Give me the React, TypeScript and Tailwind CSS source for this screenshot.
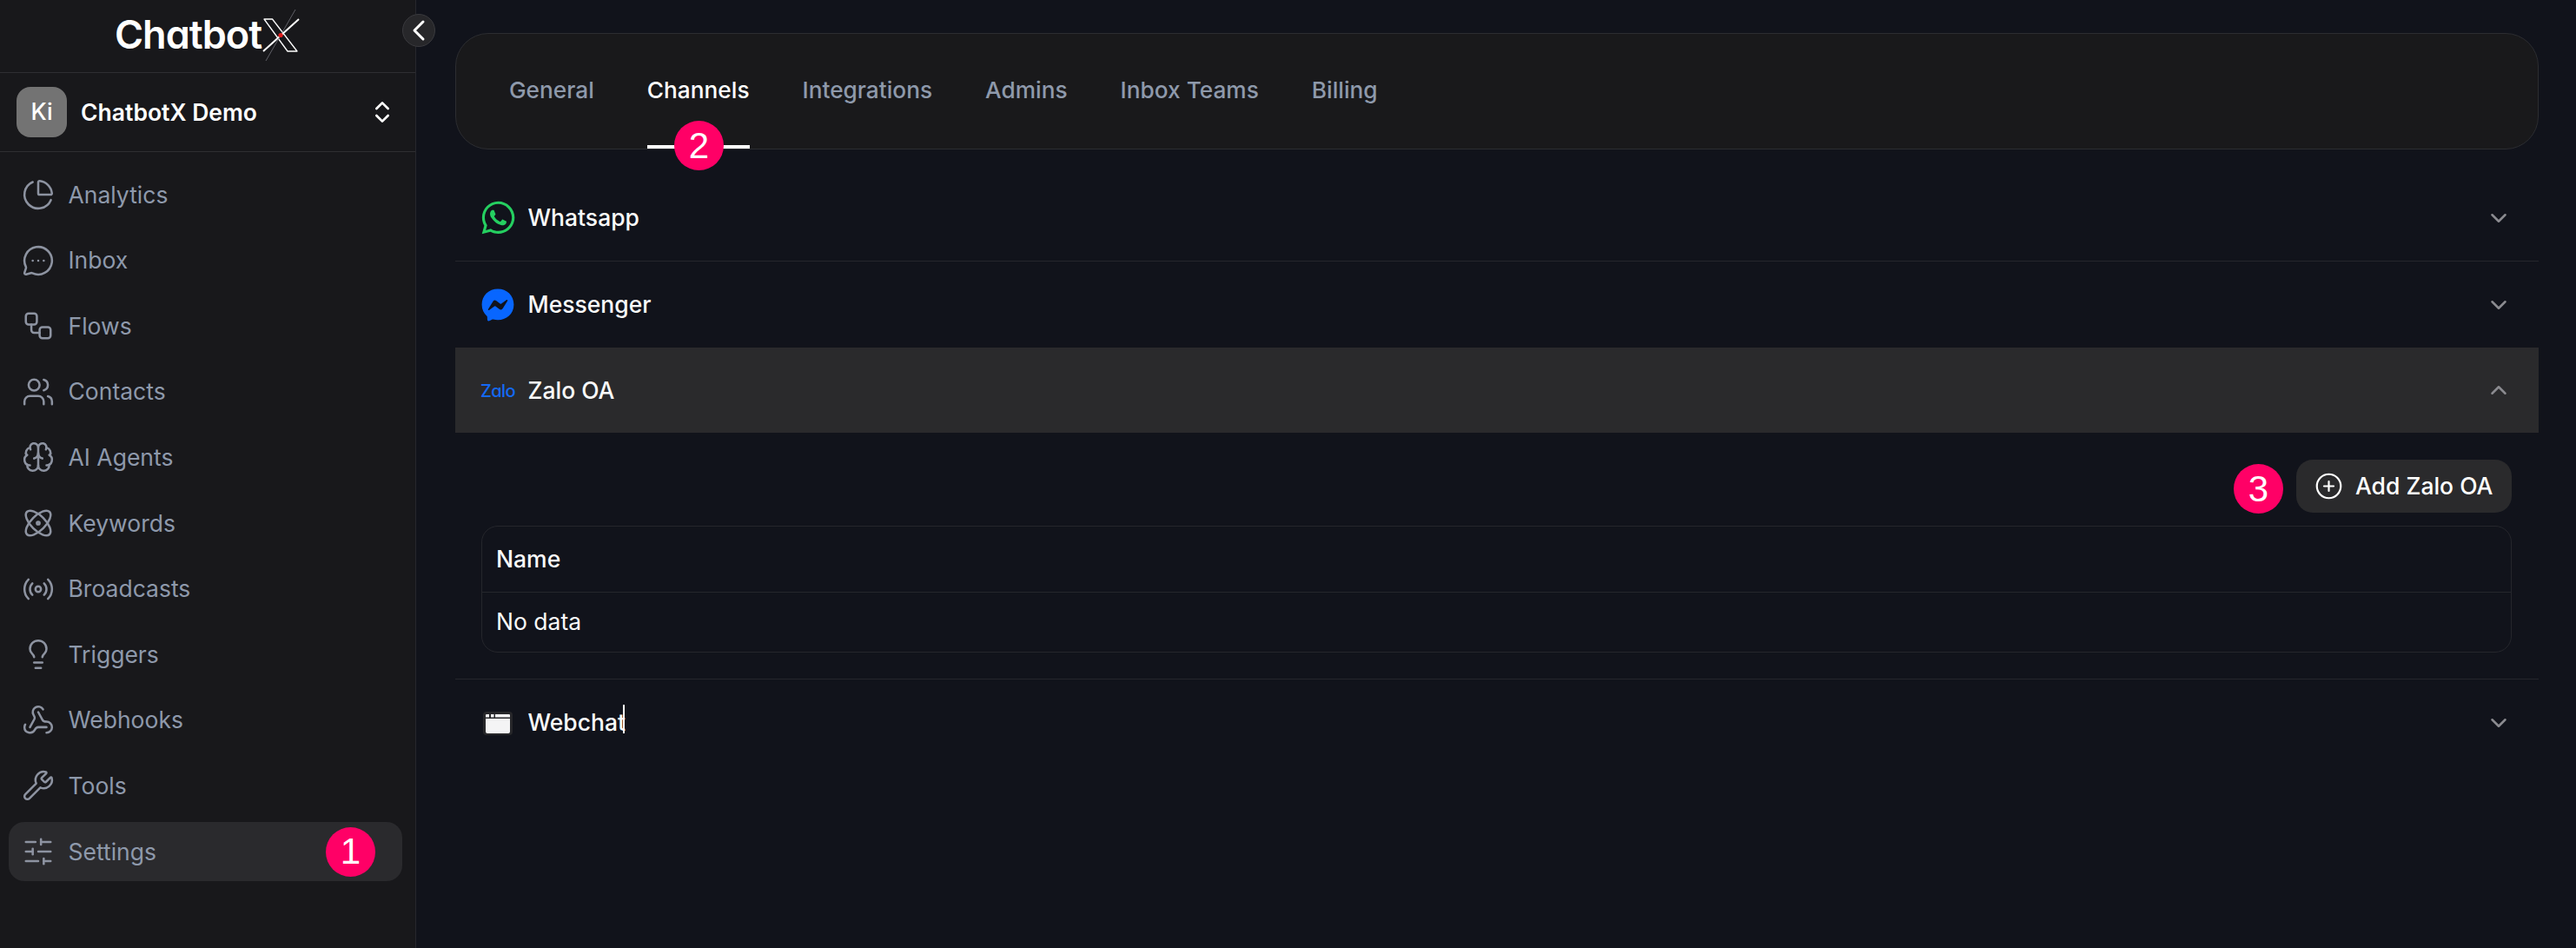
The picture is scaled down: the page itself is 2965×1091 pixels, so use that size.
import React from "react";
import {
  ChartPie, MessageCircleMore, Workflow, Users, Brain, Atom, Radio, Lightbulb, Webhook, Wrench,
  SlidersHorizontal, ChevronsUpDown, ChevronLeft, ChevronDown, ChevronUp, CirclePlus,
} from "lucide-react";
import { FaWhatsapp, FaFacebookMessenger } from "react-icons/fa";

const navItems = [
  { label: "Analytics", Icon: ChartPie },
  { label: "Inbox", Icon: MessageCircleMore },
  { label: "Flows", Icon: Workflow },
  { label: "Contacts", Icon: Users },
  { label: "AI Agents", Icon: Brain },
  { label: "Keywords", Icon: Atom },
  { label: "Broadcasts", Icon: Radio },
  { label: "Triggers", Icon: Lightbulb },
  { label: "Webhooks", Icon: Webhook },
  { label: "Tools", Icon: Wrench },
  { label: "Settings", Icon: SlidersHorizontal },
];

const tabs = ["General", "Channels", "Integrations", "Admins", "Inbox Teams", "Billing"];

function Badge({ n, className }: { n: string; className: string }) {
  return (
    <span
      className={
        "absolute flex h-[57px] w-[57px] items-center justify-center rounded-full bg-[#ff0066] font-['Liberation_Sans',sans-serif] text-[42px] leading-none text-white " +
        className
      }
    >
      {n}
    </span>
  );
}

function LogoX() {
  return (
    <svg width="46" height="62" viewBox="0 0 46 62" fill="none" className="shrink-0">
      <path d="M3 13 L12.5 13 L41 50 L30 50 Z" stroke="#fff" strokeWidth="1.3" strokeLinejoin="round" />
      <path d="M43 13 L2 50" stroke="#fff" strokeWidth="2" />
      <path d="M39 2 L5 61" stroke="#71717a" strokeWidth="0.8" />
      <circle cx="22" cy="31.5" r="2.6" fill="#e11d1d" />
    </svg>
  );
}

function WebchatIcon() {
  return (
    <svg width="38" height="38" viewBox="0 0 38 38" className="shrink-0">
      <rect x="2" y="6" width="34" height="27" rx="4" fill="#27272a" />
      <path d="M5 14h28v15a2 2 0 0 1-2 2H7a2 2 0 0 1-2-2z" fill="#f4f4f5" />
      <path d="M5 12.500V10a1 1 0 0 1 1-1h3v3.500z" fill="#f4f4f5" />
      <rect x="11" y="9" width="3.500" height="3.500" fill="#f4f4f5" />
      <path d="M16 9h16a1 1 0 0 1 1 1v2.500H16z" fill="#f4f4f5" />
    </svg>
  );
}

function Row({ icon, label, open, border, caret }: { icon: React.ReactNode; label: string; open?: boolean; border?: boolean; caret?: boolean }) {
  const Chevron = open ? ChevronUp : ChevronDown;
  return (
    <div
      className={
        "flex items-center pl-[30px] pr-[31px] " +
        (open ? "h-[98px] bg-[#2a2a2c] " : "h-[99px] ") +
        (border ? "box-content border-b border-[#25262c]" : "")
      }
    >
      <span className="flex w-[38px] shrink-0 items-center justify-center">{icon}</span>
      <span className="relative ml-[15.500px] pt-[1px] text-[26.5px] font-medium text-[#fafafa]">
        {label}
        {caret && <span className="absolute right-[1px] top-0 h-[33px] w-[2px] bg-white" />}
      </span>
      <Chevron size={30} strokeWidth={2} className="ml-auto text-[#8b8b90]" />
    </div>
  );
}

export default function App() {
  return (
    <div className="flex h-[1091px] w-[2965px] overflow-hidden bg-[#11131b] font-['Inter','Noto_Sans',sans-serif] antialiased">
      <aside className="relative flex w-[479px] shrink-0 flex-col border-r border-[#26272d] bg-[#18181b]">
        <button className="absolute right-[-23px] top-[16px] z-10 flex h-[38px] w-[38px] items-center justify-center rounded-full border border-[#3a3a3e] bg-[#27272a] text-white">
          <ChevronLeft size={40} strokeWidth={1.8} className="shrink-0" />
        </button>
        <div className="flex h-[84px] items-center justify-center border-b border-[#2e2e32] pb-[4px] pl-[1px]">
          <span className="font-['Inter',sans-serif] text-[45px] font-semibold leading-none tracking-[-1px] text-white [font-feature-settings:'cv11']">
            Chatbot
          </span>
          <LogoX />
        </div>
        <div className="flex h-[91px] items-center border-b border-[#2e2e32] pl-[19px] pr-[22px]">
          <span className="flex h-[58px] w-[58px] items-center justify-center rounded-[16px] bg-[#737373] text-[26.5px] font-medium text-white">
            Ki
          </span>
          <span className="ml-[16px] pt-[1px] text-[26.5px] font-semibold text-white">ChatbotX Demo</span>
          <ChevronsUpDown size={32} strokeWidth={2} className="ml-auto text-white" />
        </div>
        <nav className="flex flex-col gap-[7.6px] pl-[10px] pr-[15px] pt-[15px]">
          {navItems.map(({ label, Icon }) => (
            <div
              key={label}
              className={
                "relative flex h-[68px] items-center gap-[15.500px] rounded-[18px] pl-[15px] text-[26.5px] text-[#8e99ab] " +
                (label === "Settings" ? "bg-[#2a2a2d]" : "")
              }
            >
              <Icon size={38} strokeWidth={1.6} className="shrink-0 text-[#8d93a1]" />
              <span className="pt-[1px]">{label}</span>
              {label === "Settings" && <Badge n="1" className="right-[31px] top-[6px]" />}
            </div>
          ))}
        </nav>
      </aside>

      <main className="flex min-w-0 flex-1 flex-col pl-[45px] pr-[43px] pt-[38px]">
        <div className="flex h-[134px] items-stretch gap-[61px] rounded-[38px] border border-[#2c2d31] bg-[#19191b] pl-[61px]">
          {tabs.map((t) => {
            const active = t === "Channels";
            return (
              <div
                key={t}
                className={
                  "relative flex items-center border-b-[4px] pt-[2px] text-[26.25px] font-medium " +
                  (active ? "border-white text-white" : "border-transparent text-[#8e99ab]")
                }
              >
                {t}
                {active && <Badge n="2" className="bottom-[-29px] left-[31px] z-10" />}
              </div>
            );
          })}
        </div>

        <div className="mt-[29px] flex flex-col">
          <Row border label="Whatsapp" icon={<FaWhatsapp size={43} className="shrink-0 text-[#25cf60]" />} />
          <Row label="Messenger" icon={<FaFacebookMessenger size={38} className="text-[#0866ff]" />} />
          <Row
            open
            label="Zalo OA"
            icon={<span className="pt-[2px] font-['Inter',sans-serif] text-[20px] font-medium leading-none tracking-[-0.6px] text-[#1469f5] [font-feature-settings:'cv11']">Zalo</span>}
          />
          <div className="border-b border-[#25262c] pb-[30px] pl-[30px] pr-[31px] pt-[31px]">
            <div className="relative flex justify-end">
              <Badge n="3" className="right-[263px] top-[5px]" />
              <button className="flex h-[61px] w-[248px] items-center gap-[14px] rounded-[19px] bg-[#2a2a2c] pl-[21px] text-[26.5px] font-medium text-white">
                <CirclePlus size={33} strokeWidth={1.6} className="shrink-0" />
                Add Zalo OA
              </button>
            </div>
            <div className="mt-[15px] flex h-[146px] flex-col rounded-[19px] border border-[#25262c] text-[26.5px] text-[#fafafa]">
              <div className="flex h-[76px] items-center border-b border-[#25262c] pl-[16px] font-medium">Name</div>
              <div className="flex flex-1 items-center pl-[16px]">No data</div>
            </div>
          </div>
          <Row caret label="Webchat" icon={<WebchatIcon />} />
        </div>
      </main>
    </div>
  );
}
